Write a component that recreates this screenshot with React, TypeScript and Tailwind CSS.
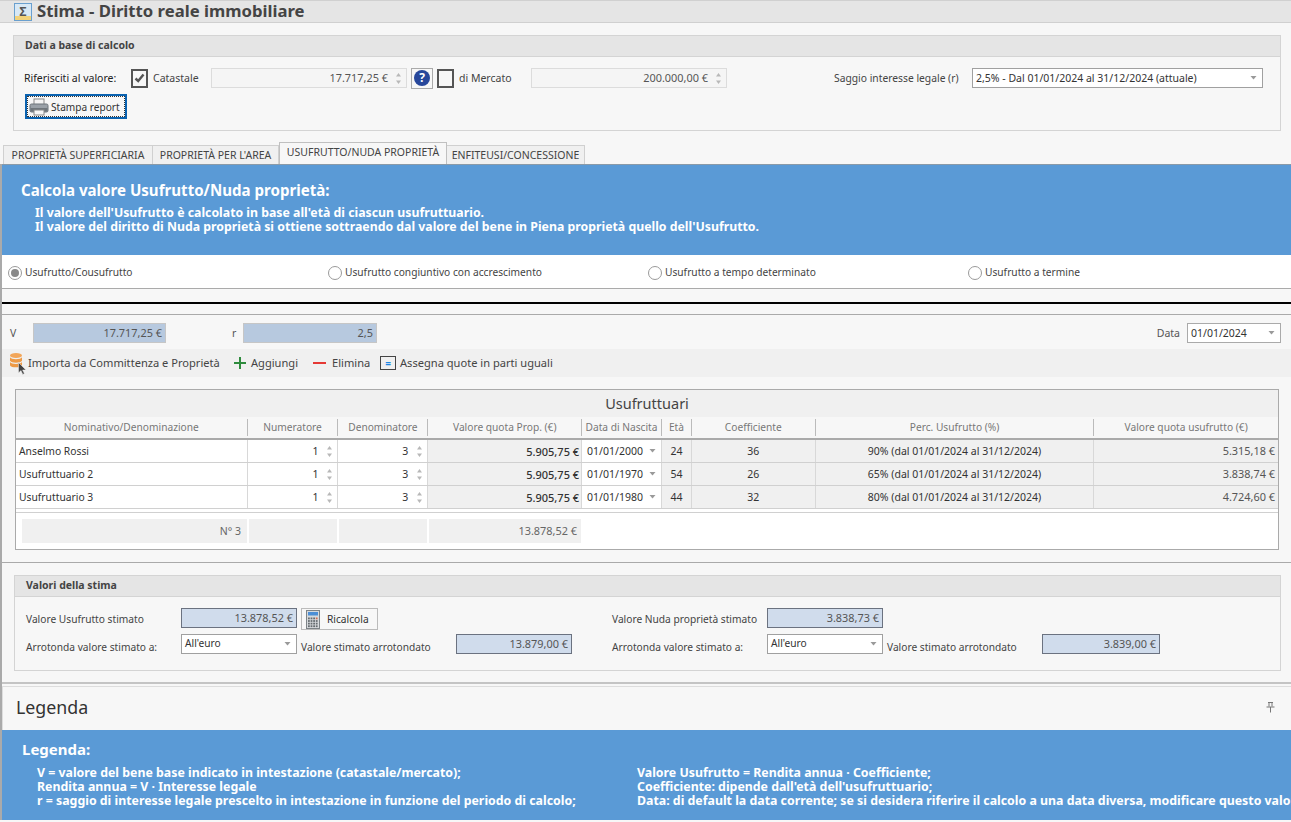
const font = "font-['Tahoma','Noto_Sans','Open_Sans',sans-serif]";

function Spin({ className = "" }: { className?: string }) {
  return (
    <span className={"flex w-[10px] shrink-0 flex-col items-center gap-[3px] " + className}>
      <svg width="7" height="5" viewBox="0 0 7 5"><path d="M1 4.5 3.5 1 6 4.5Z" fill="#b8b8b8" /></svg>
      <svg width="7" height="5" viewBox="0 0 7 5"><path d="M1 .5 3.5 4 6 .5Z" fill="#b8b8b8" /></svg>
    </span>
  );
}

function Caret({ className = "" }: { className?: string }) {
  return (
    <svg className={"shrink-0 " + className} width="7" height="4" viewBox="0 0 7 4">
      <path d="M.5 0H6.5L3.5 3.5Z" fill="#9a9a9a" />
    </svg>
  );
}

function Check({ checked }: { checked?: boolean }) {
  return (
    <span className="flex h-[19px] w-[17px] shrink-0 items-center justify-center border-2 border-[#555]">
      {checked && (
        <svg width="11" height="10" viewBox="0 0 11 10">
          <path d="M1.5 5.5 4.2 8 9.5 1.5" fill="none" stroke="#555" strokeWidth="2.4" />
        </svg>
      )}
    </span>
  );
}

function SpinInput({ value, w }: { value: string; w: string }) {
  return (
    <div className={"flex h-5 items-center justify-end border border-[#dcdcdc] bg-[#f5f5f5] pr-[3px] text-[10.9px] text-[#555] " + w}>
      <span className="mr-[5px]">{value}</span>
      <Spin />
    </div>
  );
}

function Radio({ label, on, w }: { label: string; on?: boolean; w: string }) {
  return (
    <div className={"flex items-center gap-[3px] " + w}>
      <span className="flex h-[14px] w-[14px] items-center justify-center rounded-full border border-[#9a9a9a] bg-white">
        {on && <span className="h-2 w-2 rounded-full bg-[#888]" />}
      </span>
      <span className="text-[10.2px] text-[#444]">{label}</span>
    </div>
  );
}

function Group({ title, h, children }: { title: string; h: string; children: React.ReactNode }) {
  return (
    <section className={"flex flex-col border border-[#d4d4d4] " + h}>
      <h3 className="flex h-[21px] shrink-0 items-center border-b border-[#d4d4d4] bg-[#e5e5e5] pb-[1px] pl-[11px] font-bold text-[#444]">
        {title}
      </h3>
      {children}
    </section>
  );
}

function Printer() {
  return (
    <svg className="shrink-0" width="20" height="18" viewBox="0 0 20 18">
      <rect x="5" y="1" width="10" height="6" fill="#f4f4f4" stroke="#8a8a8a" />
      <rect x="1" y="6" width="18" height="8" rx="1.5" fill="#9aa1a8" stroke="#6d747a" />
      <rect x="1.5" y="10" width="17" height="3.5" fill="#6f767c" />
      <rect x="5" y="12" width="10" height="5" fill="#f7f7f7" stroke="#8a8a8a" />
    </svg>
  );
}

function Calc() {
  const keys = [0, 1, 2, 3];
  return (
    <svg className="shrink-0" width="14" height="19" viewBox="0 0 14 19">
      <rect x="0.5" y="0.5" width="13" height="18" fill="#d7dadd" stroke="#7d8387" />
      <rect x="2" y="2" width="10" height="3.5" fill="#4d8fd6" />
      {keys.map((r) =>
        [0, 1, 2, 3].map((c) => (
          <rect key={`${r}-${c}`} x={2 + c * 2.6} y={7.5 + r * 2.6} width="1.8" height="1.8" fill={c === 3 && r === 0 ? "#d66a4d" : "#666c70"} />
        )),
      )}
    </svg>
  );
}

function Db() {
  return (
    <svg className="shrink-0" width="20" height="24" viewBox="0 0 20 24">
      <ellipse cx="8" cy="4.5" rx="6" ry="2.6" fill="#f2a65a" />
      <path d="M2 6.3c1 2.6 11 2.6 12 0v3.4c-1 2.6-11 2.6-12 0Z" fill="#ee9a45" />
      <path d="M2 11c1 2.6 11 2.6 12 0v3.4c-1 2.6-11 2.6-12 0Z" fill="#ee9a45" />
      <path d="M10.5 11.5v10.5l2.4-2.4 1.9 3.8 1.6-.8-1.8-3.6h3.4Z" fill="#444" stroke="#f0f0f0" strokeWidth=".5" />
    </svg>
  );
}

function Readonly({ value, w, dark }: { value: string; w: string; dark?: boolean }) {
  return (
    <div className={"flex h-5 shrink-0 items-center justify-end pr-[3px] text-[10.9px] text-[#555] " + w + (dark ? " border border-[#6b7280] bg-[#d0dcec]" : " border border-[#c6c6c6] bg-[#b7c9df]")}>
      {value}
    </div>
  );
}

function Select({ value, w, lift }: { value: string; w: string; lift?: boolean }) {
  return (
    <div className={"flex h-5 shrink-0 items-center justify-between border border-[#a0a0a0] bg-white pl-[3px] pr-[5px] text-[#333] " + w}>
      <span className={lift ? "-mt-[1px]" : ""}>{value}</span>
      <Caret />
    </div>
  );
}

const cols = ["w-[232px]", "w-[91px]", "w-[90px]", "w-[154px]", "w-[80px]", "w-[30px]", "w-[124px]", "w-[279px]", "w-[184px]"];
const heads = ["Nominativo/Denominazione", "Numeratore", "Denominatore", "Valore quota Prop. (€)", "Data di Nascita", "Età", "Coefficiente", "Perc. Usufrutto (%)", "Valore quota usufrutto (€)"];
const rows = [
  { name: "Anselmo Rossi", date: "01/01/2000", age: "24", coef: "36", perc: "90% (dal 01/01/2024 al 31/12/2024)", val: "5.315,18 €" },
  { name: "Usufruttuario 2", date: "01/01/1970", age: "54", coef: "26", perc: "65% (dal 01/01/2024 al 31/12/2024)", val: "3.838,74 €" },
  { name: "Usufruttuario 3", date: "01/01/1980", age: "44", coef: "32", perc: "80% (dal 01/01/2024 al 31/12/2024)", val: "4.724,60 €" },
];

function Table() {
  return (
    <div className="ml-[13px] mr-3 mt-3 h-[161px] border border-[#aaa] bg-white">
      <div className="flex h-[27px] items-center justify-center bg-[#f0f0f0] text-[14.5px] text-[#444]">Usufruttuari</div>
      <div className="flex h-[23px] border-b-2 border-[#aaa] bg-[#f7f7f7] text-[10.2px]">
        {heads.map((h, i) => (
          <div key={h} className={"my-[2px] flex items-center justify-center border-[#bbb] text-[#777] " + cols[i] + (i < 8 ? " border-r" : "")}>
            {h}
          </div>
        ))}
      </div>
      {rows.map((r) => (
        <div key={r.name} className="flex h-[23px] border-b border-[#d0d0d0] text-[#333]">
          <div className={"flex items-center border-r border-[#d8d8d8] pl-[3px] text-[10.3px] " + cols[0]}>{r.name}</div>
          <div className={"flex items-center justify-end gap-[3px] border-r border-[#d8d8d8] pr-[3px] " + cols[1]}>1<Spin className="ml-[3px]" /></div>
          <div className={"flex items-center justify-end gap-[3px] border-r border-[#d8d8d8] pr-[3px] " + cols[2]}>3<Spin className="ml-[3px]" /></div>
          <div className={"flex items-center justify-end border-r border-[#d8d8d8] bg-[#f0f0f0] pr-[2px] text-[11px] font-medium " + cols[3]}>5.905,75 €</div>
          <div className={"flex items-center justify-between border-r border-[#d8d8d8] pl-[5px] pr-[5px] " + cols[4]}>{r.date}<Caret /></div>
          <div className={"flex items-center justify-center border-r border-[#d8d8d8] bg-[#f0f0f0] " + cols[5]}>{r.age}</div>
          <div className={"flex items-center justify-center border-r border-[#d8d8d8] bg-[#f0f0f0] " + cols[6]}>{r.coef}</div>
          <div className={"flex items-center justify-center border-r border-[#d8d8d8] bg-[#f0f0f0] " + cols[7]}>{r.perc}</div>
          <div className={"flex items-center justify-end bg-[#f0f0f0] pr-[3px] text-[10.9px] text-[#555] " + cols[8]}>{r.val}</div>
        </div>
      ))}
      <div className="mt-[3px] border-t border-[#d0d0d0] pl-[6px] pt-[6px]">
        <div className="flex h-6 gap-[2px] text-[#666]">
          <div className="flex w-[225px] items-center justify-end bg-[#f0f0f0] pr-[6px]">N° 3</div>
          <div className="w-[88px] bg-[#f0f0f0]" />
          <div className="w-[88px] bg-[#f0f0f0]" />
          <div className="flex w-[152px] items-center justify-end bg-[#f0f0f0] pr-[4px] text-[10.9px]">13.878,52 €</div>
        </div>
      </div>
    </div>
  );
}

function StimaHalf({ label, value, rounded, calc, lastW }: { label: string; value: string; rounded: string; calc?: boolean; lastW: string }) {
  return (
    <div className="w-[586px] shrink-0 text-[10.2px]">
      <div className="flex h-[22px] items-start">
        <span className="mt-[6px] w-[155px] shrink-0 whitespace-nowrap text-[#444]">{label}</span>
        <Readonly value={value} w="w-[116px]" dark />
        {calc && (
          <button type="button" className="ml-1 flex h-[22px] w-[77px] items-center gap-[7px] border border-[#bbb] bg-[#f7f7f7] pl-[4px] text-[#333]">
            <Calc />
            Ricalcola
          </button>
        )}
      </div>
      <div className="mt-1 flex h-5 items-start">
        <span className="mt-2 w-[155px] shrink-0 text-[#444]">Arrotonda valore stimato a:</span>
        <Select value="All'euro" w="w-[116px]" lift />
        <span className="ml-1 mt-2 w-[155px] shrink-0 text-[#444]">Valore stimato arrotondato</span>
        <Readonly value={rounded} w={lastW} dark />
      </div>
    </div>
  );
}

export default function App() {
  return (
    <div className={"h-[822px] w-[1291px] overflow-hidden bg-[#f7f7f7] text-[10.5px] leading-none " + font}>
      <header className="flex h-[23px] items-center gap-[5px] border-y border-[#d0d0d0] bg-[#e5e5e5] pl-[14px]">
        <span className="flex h-[18px] w-[18px] items-center justify-center border border-[#6aa0cf] bg-[linear-gradient(#d8e8f5_78%,#f2d27a_78%)] text-[12px] font-bold text-[#555]">Σ</span>
        <h1 className="text-[16.7px] font-bold text-[#444]">Stima - Diritto reale immobiliare</h1>
      </header>

      <div className="mx-[13px] mt-3 w-[1268px]">
        <Group title="Dati a base di calcolo" h="h-[96px]">
          <div className="mt-[11px] flex h-5 items-center pl-[10px] pr-[17px]">
            <span className="w-[107px] text-[#222]">Riferisciti al valore:</span>
            <Check checked />
            <span className="ml-[5px] w-[58px] text-[#444]">Catastale</span>
            <SpinInput value="17.717,25 €" w="w-[196px]" />
            <span className="ml-1 flex h-[21px] w-[22px] items-center justify-center border border-[#aaa]">
              <span className="flex h-4 w-4 items-center justify-center rounded-full bg-[#27479b] text-[12px] font-bold text-white">?</span>
            </span>
            <span className="ml-1"><Check /></span>
            <span className="ml-[5px] w-[72px] text-[#444]">di Mercato</span>
            <SpinInput value="200.000,00 €" w="w-[196px]" />
            <span className="ml-[107px] w-[138px] whitespace-nowrap text-[10.3px] text-[#444]">Saggio interesse legale (r)</span>
            <Select value="2,5% - Dal 01/01/2024 al 31/12/2024 (attuale)" w="w-[291px]" />
          </div>
          <button type="button" className="ml-[11px] mt-[6px] flex h-[25px] w-[102px] items-center gap-[2px] whitespace-nowrap border-2 border-[#0a62b0] pl-[2px] pt-[1px] text-[10.1px] text-[#333] outline-1 -outline-offset-3 outline-dotted outline-[#333]">
            <Printer />
            Stampa report
          </button>
        </Group>
      </div>

      <nav className="mt-[11px] flex h-[22px] items-end whitespace-nowrap pl-[3px] text-[#444]">
        <span className="flex h-[19px] w-[150px] items-center justify-center border border-b-0 border-[#d0d0d0] bg-[#f0f0f0]">PROPRIETÀ SUPERFICIARIA</span>
        <span className="flex h-[19px] w-[126px] items-center justify-center border border-b-0 border-l-0 border-[#d0d0d0] bg-[#f0f0f0]">PROPRIETÀ PER L'AREA</span>
        <span className="flex h-[22px] w-[168px] items-center justify-center border border-b-0 border-[#c0c0c0] bg-[#f7f7f7] pb-[2px]">USUFRUTTO/NUDA PROPRIETÀ</span>
        <span className="flex h-[19px] w-[138px] items-center justify-center border border-b-0 border-l-0 border-[#d0d0d0] bg-[#f0f0f0]">ENFITEUSI/CONCESSIONE</span>
      </nav>

      <div className="border-l-2 border-[#aaa]">
        <div className="h-[91px] border-t border-[#8a9aa8] bg-[#5a9ad6] pl-[19px] pt-[18px] font-bold text-white">
          <p className="text-[15.1px]">Calcola valore Usufrutto/Nuda proprietà:</p>
          <div className="mt-2 pl-[14px] text-[12.3px] leading-[14px]">
            <p>Il valore dell'Usufrutto è calcolato in base all'età di ciascun usufruttuario.</p>
            <p>Il valore del diritto di Nuda proprietà si ottiene sottraendo dal valore del bene in Piena proprietà quello dell'Usufrutto.</p>
          </div>
        </div>

        <div className="flex h-[34px] items-center border-b border-[#aaa] bg-white pl-[6px] pt-[2px]">
          <Radio label="Usufrutto/Cousufrutto" on w="w-[320px]" />
          <Radio label="Usufrutto congiuntivo con accrescimento" w="w-[320px]" />
          <Radio label="Usufrutto a tempo determinato" w="w-[320px]" />
          <Radio label="Usufrutto a termine" w="w-[300px]" />
        </div>

        <div className="mt-[13px] h-[2px] bg-black" />

        <div className="mt-[10px] h-[249px] border-y border-[#aaa]">
          <div className="flex h-[34px] items-center pl-2 pr-[10px] pt-[2px] text-[#555]">
            <span className="w-[23px]">V</span>
            <Readonly value="17.717,25 €" w="w-[133px]" />
            <span className="ml-[66px] w-[11px]">r</span>
            <Readonly value="2,5" w="w-[134px]" />
            <span className="ml-auto mr-[7px]">Data</span>
            <div className="flex h-5 w-[94px] items-center justify-between border border-[#aaa] bg-white pl-[3px] pr-[5px] text-[#333]">
              01/01/2024
              <Caret />
            </div>
          </div>
          <div className="flex h-[28px] items-center bg-[#f0f0f0] pb-[1px] pl-[6px] text-[11.1px] text-[#444]">
            <Db />
            <span className="w-[193px] whitespace-nowrap">Importa da Committenza e Proprietà</span>
            <svg className="ml-3 shrink-0" width="14" height="14" viewBox="0 0 14 14"><path d="M7 1v12M1 7h12" stroke="#2e8b3d" strokeWidth="2" /></svg>
            <span className="ml-[4px] w-[50px]">Aggiungi</span>
            <svg className="ml-[12px] shrink-0" width="14" height="14" viewBox="0 0 14 14"><path d="M0 7h13" stroke="#e53935" strokeWidth="2" /></svg>
            <span className="ml-[5px] w-[38px]">Elimina</span>
            <span className="ml-[10px] flex h-[14px] w-[16px] shrink-0 items-center justify-center border border-[#444] text-[10px] font-bold text-[#1e88e5]">=</span>
            <span className="ml-[4px] whitespace-nowrap">Assegna quote in parti uguali</span>
          </div>
          <Table />
        </div>

        <div className="ml-3 mt-3 w-[1267px]">
          <Group title="Valori della stima" h="h-[96px]">
            <div className="mt-[11px] flex pl-[11px]">
              <StimaHalf label="Valore Usufrutto stimato" value="13.878,52 €" rounded="13.879,00 €" calc lastW="w-[116px]" />
              <StimaHalf label="Valore Nuda proprietà stimato" value="3.838,73 €" rounded="3.839,00 €" lastW="w-[118px]" />
            </div>
          </Group>
        </div>

        <div className="mt-[11px] border-t-2 border-[#c4c4c4] pt-[2px]">
          <div className="flex h-[44px] items-center justify-between border-l border-t border-[#ddd] pb-[2px] pl-[13px] pr-[16px]">
            <span className="text-[17.8px] text-[#333]">Legenda</span>
            <svg width="9" height="11" viewBox="0 0 9 11"><path d="M2 .5h5M3 .5v4M6 .5v4M.5 5h8M4.5 5v5.5" stroke="#777" fill="none" /></svg>
          </div>
          <div className="h-[90px] overflow-hidden bg-[#5a9ad6] pl-5 pt-3 font-bold text-white">
            <p className="text-[15px]">Legenda:</p>
            <div className="mt-[9px] flex whitespace-nowrap pl-[15px] text-[12.35px] leading-[14px]">
              <div className="w-[600px] shrink-0">
                <p>V = valore del bene base indicato in intestazione (catastale/mercato);</p>
                <p>Rendita annua = V · Interesse legale</p>
                <p>r = saggio di interesse legale prescelto in intestazione in funzione del periodo di calcolo;</p>
              </div>
              <div className="shrink-0">
                <p>Valore Usufrutto = Rendita annua · Coefficiente;</p>
                <p>Coefficiente: dipende dall'età dell'usufruttuario;</p>
                <p>Data: di default la data corrente; se si desidera riferire il calcolo a una data diversa, modificare questo valore.</p>
              </div>
            </div>
          </div>
        </div>
      </div>
    </div>
  );
}
